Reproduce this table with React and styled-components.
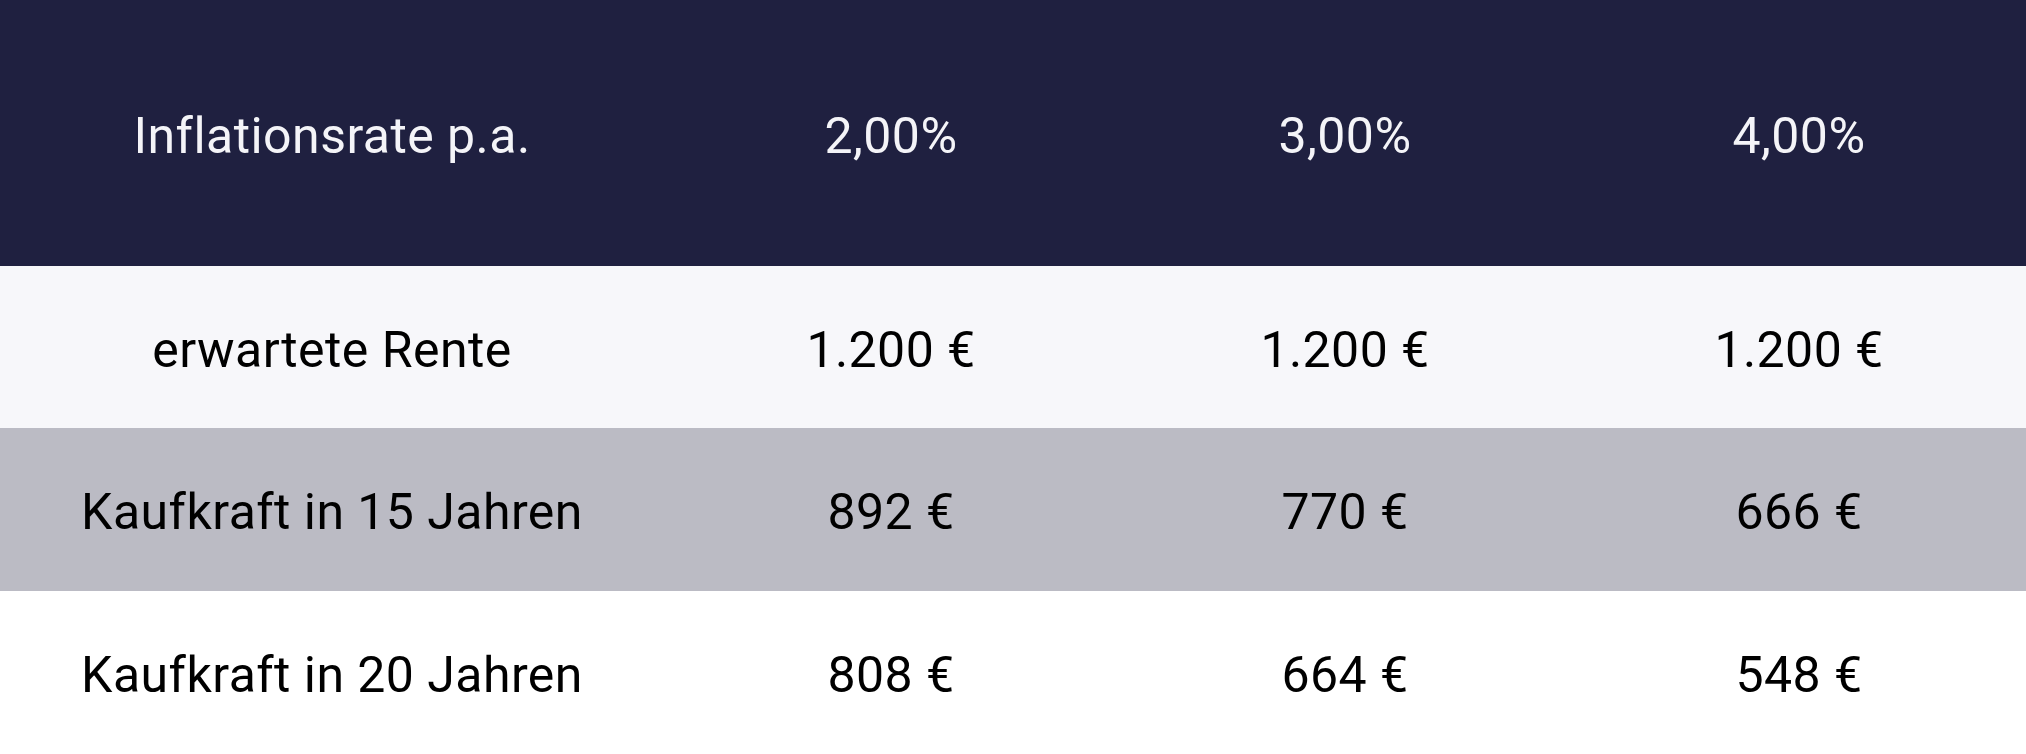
import React from "react";
import styled, { createGlobalStyle } from "styled-components";

const Global = createGlobalStyle`
  html, body { margin: 0; padding: 0; background: #ffffff; }
  body { font-family: Roboto, "Noto Sans", "Liberation Sans", sans-serif; }
`;

const Table = styled.div`
  display: grid;
  grid-template-columns: 664fr 454fr 454fr 454fr;
  width: 100%;
`;

const Row = styled.div`
  display: contents;
`;

const Cell = styled.div`
  display: flex;
  align-items: center;
  justify-content: center;
  box-sizing: border-box;
  padding-top: 5px;
  height: ${(p) => p.$h}px;
  background: ${(p) => p.$bg};
  color: ${(p) => p.$fg};
  font-size: 50px;
  font-weight: 400;
  letter-spacing: 0.45px;
  white-space: nowrap;
`;

const rows = [
  { h: 266, bg: "#1f2040", fg: "#f4f4f8", cells: ["Inflationsrate p.a.", "2,00%", "3,00%", "4,00%"] },
  { h: 162, bg: "#f7f7fa", fg: "#000000", cells: ["erwartete Rente", "1.200 €", "1.200 €", "1.200 €"] },
  { h: 163, bg: "#bbbbc4", fg: "#000000", cells: ["Kaufkraft in 15 Jahren", "892 €", "770 €", "666 €"] },
  { h: 163, bg: "#ffffff", fg: "#000000", cells: ["Kaufkraft in 20 Jahren", "808 €", "664 €", "548 €"] },
];

export default function App() {
  return (
    <>
      <Global />
      <Table>
        {rows.map((r, i) => (
          <Row key={i}>
            {r.cells.map((c, j) => (
              <Cell key={j} $h={r.h} $bg={r.bg} $fg={r.fg}>
                {c}
              </Cell>
            ))}
          </Row>
        ))}
      </Table>
    </>
  );
}
